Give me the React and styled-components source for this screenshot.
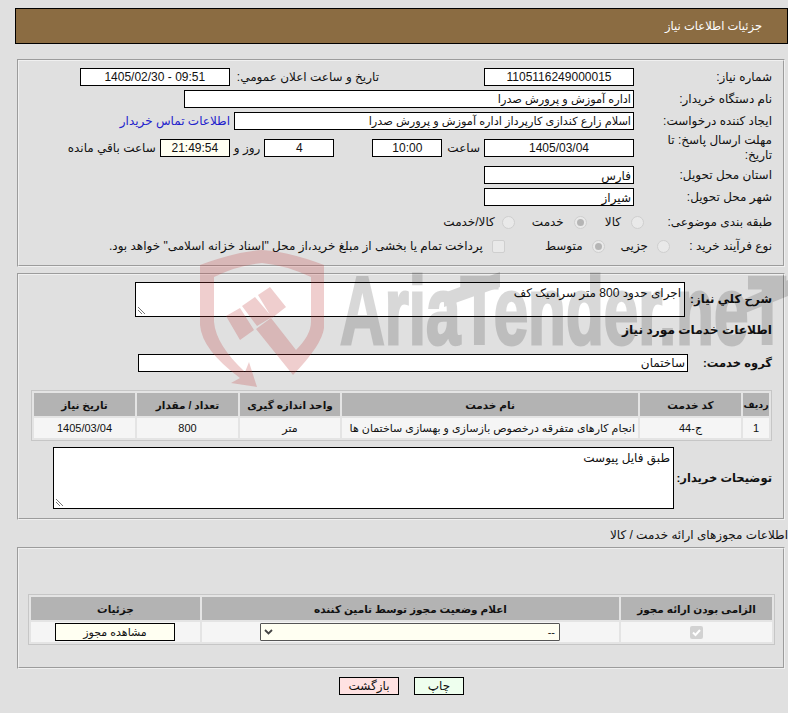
import React from 'react';
import styled, { createGlobalStyle } from 'styled-components';

const GlobalStyle = createGlobalStyle`
  html, body { margin: 0; padding: 0; background: #e0e0e0; }
  body { font-family: "Liberation Sans", "DejaVu Sans", sans-serif; font-size: 12px; color: #111; }
`;

const Page = styled.div`
  position: relative;
  width: 788px;
  height: 713px;
  overflow: hidden;
  direction: rtl;
  padding: 8px 3px 0 15px;
  box-sizing: border-box;
`;

const Header = styled.div`
  box-sizing: border-box;
  height: 36px;
  margin-right: -3px;
  background: #8b6c42;
  border: 1px solid #000;
  color: #fff;
  font-size: 11.5px;
  display: flex;
  align-items: center;
  padding-right: 25px;
`;

const Fieldset = styled.div`
  border: 2px groove #f0f0f0;
  box-sizing: border-box;
  height: ${p => p.$h}px;
  margin-top: ${p => p.$mt || 0}px;
  margin-left: 2px;
  padding-top: ${p => p.$pt || 0}px;
`;

const Row = styled.div`
  display: flex;
  align-items: center;
  height: ${p => p.$h || 22}px;
`;

const Label = styled.div`
  width: ${p => p.$w || 149}px;
  padding-right: 11px;
  padding-left: ${p => p.$pl || 0}px;
  box-sizing: border-box;
  line-height: 15px;
  flex-shrink: 0;
  white-space: ${p => (p.$wrap ? 'normal' : 'nowrap')};
`;

const BoldLabel = styled(Label)`
  font-weight: 700;
  font-size: ${p => p.$fs || 11.5}px;
`;

const Box = styled.div`
  box-sizing: border-box;
  width: ${p => p.$w}px;
  height: 18px;
  border: 1px solid #000;
  background: ${p => p.$bg || '#fff'};
  margin-right: ${p => p.$mr || 0}px;
  padding: 0 2px;
  font-size: ${p => p.$fs || 12}px;
  text-align: ${p => p.$align || 'right'};
  line-height: ${p => (p.$low ? 19 : 16)}px;
  white-space: nowrap;
  overflow: hidden;
  flex-shrink: 0;
`;

const Ltr = styled.span`
  direction: ltr;
  unicode-bidi: embed;
`;

const Text = styled.div`
  margin-right: ${p => p.$mr || 0}px;
  color: ${p => p.$color || 'inherit'};
  white-space: nowrap;
  flex-shrink: 0;
`;

const Radio = styled.span`
  box-sizing: border-box;
  width: 13px;
  height: 13px;
  border-radius: 50%;
  border: 1px solid #cfcfcf;
  background: #e9e9e9;
  margin-right: ${p => p.$mr || 0}px;
  display: flex;
  align-items: center;
  justify-content: center;
  flex-shrink: 0;
  &::after {
    content: "";
    display: ${p => (p.$on ? 'block' : 'none')};
    width: 7px;
    height: 7px;
    border-radius: 50%;
    background: #b5b5b5;
  }
`;

const Check = styled.span`
  box-sizing: border-box;
  width: 13px;
  height: 13px;
  border-radius: 2px;
  border: 1px solid #cfcfcf;
  background: #e9e9e9;
  margin-right: ${p => p.$mr || 0}px;
  flex-shrink: 0;
`;

const AreaBox = styled.div`
  position: relative;
  box-sizing: border-box;
  width: ${p => p.$w}px;
  height: ${p => p.$h}px;
  border: 1px solid #000;
  background: #fff;
  padding: 2px 3px;
  line-height: 16px;
  flex-shrink: 0;
`;

const Grip = styled.svg`
  position: absolute;
  left: 1px;
  bottom: 1px;
`;

const Table = styled.table`
  box-sizing: border-box;
  border-collapse: separate;
  border-spacing: 2px;
  border: 1px solid #c6c6c6;
  table-layout: fixed;
  width: ${p => p.$w}px;
  margin-top: ${p => p.$mt || 0}px;
  margin-right: ${p => p.$mr || 0}px;
  background: #e4e4e4;
`;

const Col = styled.col`
  width: ${p => p.$w}px;
`;

const Th = styled.th`
  background: #b3b3b3;
  height: 23px;
  padding: 0;
  font-size: ${p => p.$fs || 10.5}px;
  font-weight: 700;
  text-align: center;
  white-space: nowrap;
`;

const Td = styled.td`
  background: #f5f5f5;
  height: 20px;
  padding: 0 ${p => (p.$align ? 3 : 0)}px 0 0;
  font-size: 11px;
  text-align: ${p => p.$align || 'center'};
  white-space: nowrap;
  overflow: hidden;
`;

const DescRow = styled.div`
  display: flex;
  align-items: center;
  height: 62px;
  margin-top: 6px;
`;

const Section = styled.div`
  margin-top: 6px;
  margin-right: -3px;
  height: 21px;
  line-height: 18px;
`;

const SelectBox = styled.div`
  box-sizing: border-box;
  width: 300px;
  height: 18px;
  margin-right: 59px;
  border: 1px solid #555;
  border-radius: 1px;
  background: #fffff2;
  display: flex;
  align-items: center;
  justify-content: space-between;
  padding: 0 4px 0 3px;
`;

const CheckIcon = styled.svg`
  display: block;
  margin: 0 auto;
`;

const Buttons = styled.div`
  display: flex;
  justify-content: center;
  gap: 15px;
  margin-top: 8px;
  padding-left: 3px;
`;

const Btn = styled.div`
  box-sizing: border-box;
  width: ${p => p.$w || 50}px;
  height: 18px;
  margin-right: ${p => p.$mr || 0}px;
  border: 1px solid #000;
  background: ${p => p.$bg};
  text-align: center;
  line-height: 16px;
`;

const Watermark = styled.div`
  position: absolute;
  left: 0;
  top: 0;
  width: 788px;
  height: 713px;
  pointer-events: none;
`;

const Shield = styled.svg`
  position: absolute;
  left: 0;
  top: 0;
`;

const GreyLayer = styled.div`
  position: absolute;
  left: 0;
  top: 0;
  width: 788px;
  height: 713px;
  opacity: 0.15;
`;

const WaterText = styled.div`
  position: absolute;
  left: 340px;
  top: 246px;
  direction: ltr;
  font-family: "Liberation Sans", sans-serif;
  font-weight: 700;
  font-size: 96px;
  line-height: 130px;
  color: #000;
  -webkit-text-stroke: 3px #000;
  white-space: nowrap;
  transform-origin: left top;
  transform: scaleX(0.645);
`;

const GripIcon = () => (
  <Grip width="9" height="9" viewBox="0 0 9 9">
    <path d="M1 1l7 7M1 4l4 4" stroke="#777" strokeWidth="1" fill="none" />
  </Grip>
);

export default function App() {
  return (
    <>
      <GlobalStyle />
      <Page>
        <Header>جزئیات اطلاعات نیاز</Header>

        <Fieldset $h={208} $mt={15} $pt={5}>
          <Row>
            <Label>شماره نیاز:</Label>
            <Box $w={150} $align="center"><Ltr>1105116249000015</Ltr></Box>
            <Text $mr={105}>تاریخ و ساعت اعلان عمومي:</Text>
            <Box $w={150} $align="center" $mr={7}><Ltr>1405/02/30 - 09:51</Ltr></Box>
          </Row>
          <Row>
            <Label>نام دستگاه خریدار:</Label>
            <Box $w={450} $fs={11.3}>اداره آموزش و پرورش صدرا</Box>
          </Row>
          <Row>
            <Label>ایجاد کننده درخواست:</Label>
            <Box $w={400} $fs={11.3}>اسلام زارع کندازی کارپرداز اداره آموزش و پرورش صدرا</Box>
            <Text $mr={4} $color="#2222cc">اطلاعات تماس خریدار</Text>
          </Row>
          <Row $h={32}>
            <Label $wrap $pl={18}>مهلت ارسال پاسخ: تا تاریخ:</Label>
            <Box $w={150} $align="center"><Ltr>1405/03/04</Ltr></Box>
            <Text $mr={4}>ساعت</Text>
            <Box $w={70} $align="center" $mr={5}><Ltr>10:00</Ltr></Box>
            <Box $w={70} $align="center" $mr={38}><Ltr>4</Ltr></Box>
            <Text $mr={4}>روز و</Text>
            <Box $w={70} $align="center" $bg="#fffff2" $mr={4}><Ltr>21:49:54</Ltr></Box>
            <Text $mr={4}>ساعت باقي مانده</Text>
          </Row>
          <Row>
            <Label>استان محل تحویل:</Label>
            <Box $w={150} $low>فارس</Box>
          </Row>
          <Row>
            <Label>شهر محل تحویل:</Label>
            <Box $w={150} $low>شیراز</Box>
          </Row>
          <Row $h={28}>
            <Label $w={139}>طبقه بندی موضوعی:</Label>
            <Radio />
            <Text $mr={10}>کالا</Text>
            <Radio $on $mr={18} />
            <Text $mr={10}>خدمت</Text>
            <Radio $mr={17} />
            <Text $mr={7}>کالا/خدمت</Text>
          </Row>
          <Row $h={20}>
            <Label $w={113}>نوع فرآیند خرید :</Label>
            <Radio />
            <Text $mr={9}>جزیی</Text>
            <Radio $on $mr={16} />
            <Text $mr={9}>متوسط</Text>
            <Check $mr={40} />
            <Text $mr={9}>پرداخت تمام یا بخشی از مبلغ خرید،از محل "اسناد خزانه اسلامی" خواهد بود.</Text>
          </Row>
        </Fieldset>

        <Fieldset $h={247} $mt={6} $pt={7}>
          <Row $h={35}>
            <BoldLabel $w={98} $fs={11.8}>شرح کلي نیاز:</BoldLabel>
            <AreaBox $w={550} $h={35}>اجرای حدود 800 متر سرامیک کف<GripIcon /></AreaBox>
          </Row>
          <Row $h={26}>
            <BoldLabel $w={200} $fs={12.2}>اطلاعات خدمات مورد نیاز</BoldLabel>
          </Row>
          <Row $h={40}>
            <BoldLabel $w={95}>گروه خدمت:</BoldLabel>
            <Box $w={550}>ساختمان</Box>
          </Row>
          <Table $w={741} $mt={7} $mr={11}>
            <colgroup>
              <Col $w={26} />
              <Col $w={101} />
              <Col $w={296} />
              <Col $w={100} />
              <Col $w={101} />
              <Col $w={101} />
            </colgroup>
            <thead>
              <tr>
                <Th $fs={9.5}>ردیف</Th>
                <Th>کد خدمت</Th>
                <Th>نام خدمت</Th>
                <Th>واحد اندازه گیری</Th>
                <Th>تعداد / مقدار</Th>
                <Th>تاریخ نیاز</Th>
              </tr>
            </thead>
            <tbody>
              <tr>
                <Td>1</Td>
                <Td>ج-44</Td>
                <Td $align="right">انجام کارهای متفرقه درخصوص بازسازی و بهسازی ساختمان ها</Td>
                <Td>متر</Td>
                <Td>800</Td>
                <Td>1405/03/04</Td>
              </tr>
            </tbody>
          </Table>
          <DescRow>
            <BoldLabel $w={109}>توضیحات خریدار:</BoldLabel>
            <AreaBox $w={621} $h={62}>طبق فایل پیوست<GripIcon /></AreaBox>
          </DescRow>
        </Fieldset>

        <Section>اطلاعات مجوزهای ارائه خدمت / کالا</Section>

        <Fieldset $h={122} $pt={45}>
          <Table $w={747} $mr={8}>
            <colgroup>
              <Col $w={151} />
              <Col $w={417} />
              <Col $w={169} />
            </colgroup>
            <thead>
              <tr>
                <Th>الزامی بودن ارائه مجوز</Th>
                <Th>اعلام وضعیت مجوز توسط تامین کننده</Th>
                <Th>جزئیات</Th>
              </tr>
            </thead>
            <tbody>
              <tr>
                <Td>
                  <CheckIcon width="13" height="13" viewBox="0 0 13 13">
                    <rect width="13" height="13" rx="2" fill="#d2d2d2" />
                    <path d="M3 6.5l2.5 2.5L10 4" stroke="#fff" strokeWidth="2" fill="none" />
                  </CheckIcon>
                </Td>
                <Td>
                  <SelectBox>
                    <span>--</span>
                    <svg width="9" height="6" viewBox="0 0 9 6">
                      <path d="M1 1l3.5 3.5L8 1" stroke="#444" strokeWidth="1.8" fill="none" />
                    </svg>
                  </SelectBox>
                </Td>
                <Td>
                  <Btn $w={120} $bg="#fffff2" $mr={25}>مشاهده مجوز</Btn>
                </Td>
              </tr>
            </tbody>
          </Table>
        </Fieldset>

        <Buttons>
          <Btn $bg="#eeffee">چاپ</Btn>
          <Btn $w={60} $bg="#ffe2e2">بازگشت</Btn>
        </Buttons>

        <Watermark>
          <GreyLayer>
            <WaterText>AriaTender.neT</WaterText>
            <Shield width="788" height="713" viewBox="0 0 788 713">
              <path fill="#000" d="M444 293L500 272V287L444 307ZM738 302L788 280V296L738 316Z" />
            </Shield>
          </GreyLayer>
          <Shield width="788" height="713" viewBox="0 0 788 713">
            <path
              fill="rgba(190,60,60,0.25)"
              d="M200 265Q235 252 262 250Q290 252 324 265L324 328Q322 345 293 375L256 329L271 318L296 350Q311 335 311 322L311 277Q285 265 262 263Q238 265 214 277L214 322Q216 345 245 372L249 362L257 387L231 383L240 378Q202 350 200 325Z"
            />
            <path
              fill="rgba(190,60,60,0.25)"
              d="M226 316L240 308L254 330L240 340ZM242 306L255 297L272 317L257 326ZM258 295L270 287L286 307L272 318Z"
            />
          </Shield>
        </Watermark>
      </Page>
    </>
  );
}
